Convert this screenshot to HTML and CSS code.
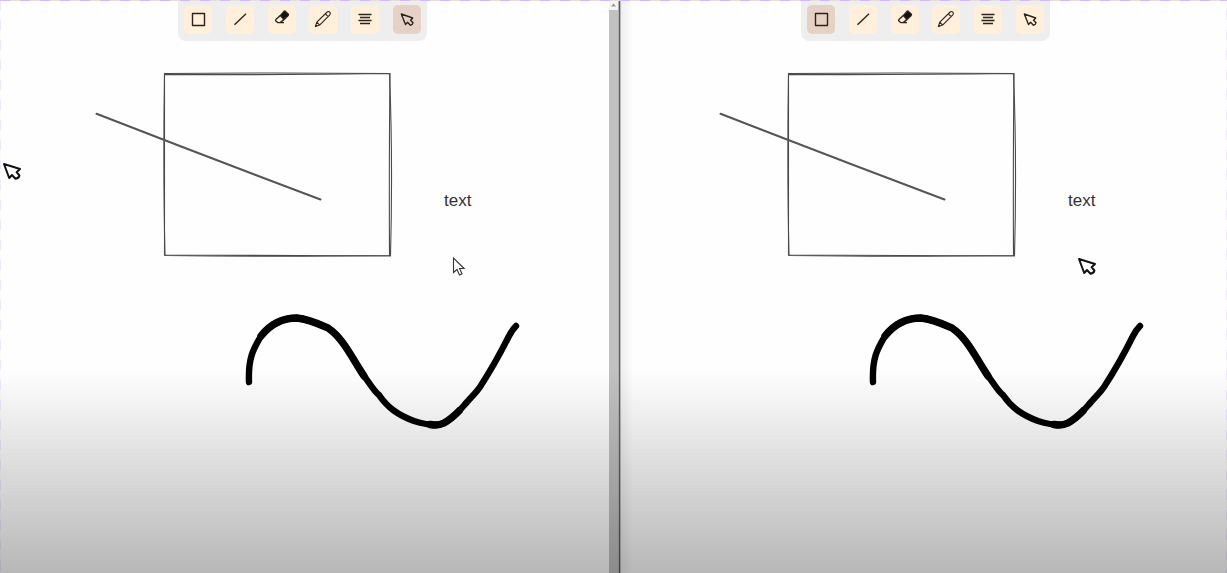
FILE: index.html
```html
<!DOCTYPE html>
<html lang="en">
<head>
<meta charset="utf-8">
<title>Shared whiteboard</title>
<link rel="stylesheet" href="styles.css">
</head>
<body>
<svg class="defs" aria-hidden="true">
  <symbol id="i-rect" viewBox="0 0 28 28"><rect x="8.5" y="7.5" width="12" height="12"/></symbol>
  <symbol id="i-line" viewBox="0 0 28 28"><path d="M8.5 18.7 20 7.7"/></symbol>
  <symbol id="i-eraser" viewBox="0 0 28 28"><path d="M12.3 9.6 16 5.400q.7-.6 1.400 0l2.800 2.600q.6.7 0 1.400l-4.200 4z" fill="#111"/><path d="M12.300 9.600 7.900 13.600q-.6.7 0 1.400l1.800 1.600h2.600l3.700-3.200M9.700 16.600H16"/></symbol>
  <symbol id="i-pencil" viewBox="0 0 28 28"><g stroke-width="1.100"><path d="M6.400 20.600 7.800 16.200 18.200 6q1.400-1 2.600.2t0 2.600L10.600 19.100zM16.400 7.800l2.800 2.800M7.800 16.200l2.800 2.900"/><path d="M6.400 20.600l1.300-1.300"/></g></symbol>
  <symbol id="i-text" viewBox="0 0 28 28"><path d="M7.500 8.500h13M9 11.500h10M7.500 14.500h13M9 17.500h10"/></symbol>
  <symbol id="i-cursor" viewBox="0 0 28 28"><path d="M8.300 8 12.500 18.500 14.600 16.200 17.400 19.200Q19.800 18.600 20 16.700L17.600 14.200 19.700 12z"/></symbol>
  <symbol id="drawing" overflow="visible">
    <g class="sketch">
      <path d="M164.500 73.500Q270 72.500 390 73.500Q389 160 389.500 255.500Q270 257 165 255.500Q163 170 164.500 73.500z"/>
      <path d="M164.500 74.500Q280 75 389.500 73.500Q393 160 390.500 256Q280 256 164.500 255Q164.500 170 164.500 74.500"/>
    </g>
    <path class="ruler" d="M96.500 113.800Q210 158 320.500 199.500"/>
    <path class="ink" d="M249 382C248 357 254 348 261 336C272 322 284 318 297 318C308 319 319 324 328 328C343 338 352 358 364 376C369 382 373 390 379 395C388 408 398 415 414 421C423 424 430 425 438 425C451 422 459 411 467 402C472 396 476 393 480 387C493 367 503 348 509 336C512 330 513 329 516 326"/>
    <path class="ink heavy" d="M261 336C272 322 284 318 297 318C308 319 319 324 328 328C343 338 352 358 364 376M430 424.500Q438 426 444 423Q451 419 459 411"/>
  </symbol>
  <symbol id="pointer" overflow="visible"><path class="pointer" d="M4 164 9.200 178 12 175 15.500 178.800Q19 178.200 19.400 175.500L16.600 172.200 20 169z"/></symbol>
</svg>
<main class="screen">
  <section class="pane pane-left" aria-label="First user">
    <svg class="scene">
      <use href="#drawing"/>
      <text class="note" x="444" y="206">text</text>
      <use href="#pointer"/>
      <path class="mouse" d="M453.500 258v14.500l3.500-3 2.500 5.500 2.500-1.200-2.400-5.300h4.600z"/>
    </svg>
    <nav class="toolbar" aria-label="Tools">
      <button class="tool" aria-label="Rectangle"><svg><use href="#i-rect"/></svg></button>
      <button class="tool" aria-label="Line"><svg><use href="#i-line"/></svg></button>
      <button class="tool" aria-label="Eraser"><svg><use href="#i-eraser"/></svg></button>
      <button class="tool" aria-label="Pencil"><svg><use href="#i-pencil"/></svg></button>
      <button class="tool" aria-label="Text"><svg><use href="#i-text"/></svg></button>
      <button class="tool active" aria-label="Select"><svg><use href="#i-cursor"/></svg></button>
    </nav>
  </section>
  <div class="scrollbar"><svg class="up" viewBox="0 0 9 9"><path d="M2 6 4.500 3 7 6z"/></svg><div class="thumb"></div></div>
  <div class="divider"></div>
  <section class="pane pane-right" aria-label="Second user">
    <svg class="scene">
      <use href="#drawing"/>
      <text class="note" x="444" y="206">text</text>
      <use href="#pointer" x="451" y="95"/>
    </svg>
    <nav class="toolbar" aria-label="Tools">
      <button class="tool active" aria-label="Rectangle"><svg><use href="#i-rect"/></svg></button>
      <button class="tool" aria-label="Line"><svg><use href="#i-line"/></svg></button>
      <button class="tool" aria-label="Eraser"><svg><use href="#i-eraser"/></svg></button>
      <button class="tool" aria-label="Pencil"><svg><use href="#i-pencil"/></svg></button>
      <button class="tool" aria-label="Text"><svg><use href="#i-text"/></svg></button>
      <button class="tool" aria-label="Select"><svg><use href="#i-cursor"/></svg></button>
    </nav>
  </section>
  <div class="shade"></div>
</main>
</body>
</html>
```
FILE: styles.css
```css
* { box-sizing: border-box; }
body {
  margin: 0;
  font-family: "Liberation Sans", Arial, sans-serif;
  background: #fefefe;
}
.defs { position: absolute; width: 0; height: 0; }
.screen {
  position: relative;
  display: grid;
  grid-template-columns: 609fr 9px 3px 606fr;
  height: 100vh;
  overflow: hidden;
}
.pane {
  display: grid;
  grid-template-rows: minmax(0, 1fr);
  overflow: hidden;
}
.pane-left { padding-right: 4px; }
.pane-right {
  padding-left: 3px;
  background: linear-gradient(90deg, #eeeeee, #fefefe 12px);
}
.scene {
  grid-area: 1 / 1;
  width: 100%;
  height: 100%;
  overflow: visible;
}
.toolbar {
  grid-area: 1 / 1;
  place-self: start center;
  display: flex;
  justify-content: space-between;
  width: 249px;
  padding: 5px 6px 7px;
  border-radius: 0 0 8px 8px;
  background: #eeeeee;
}
.tool {
  width: 28px;
  height: 29px;
  padding: 0;
  border: 0;
  border-radius: 5px;
  background: #ffefdb;
}
.tool.active { background: #e6d2c5; }
.tool svg {
  display: block;
  width: 28px;
  height: 28px;
  fill: none;
  stroke: #2b231c;
  stroke-width: 1.4;
  stroke-linejoin: round;
}
.sketch { fill: none; stroke: #4a4a4a; stroke-width: 1.1; }
.ruler { fill: none; stroke: #555555; stroke-width: 2; stroke-linecap: round; }
.ink {
  fill: none;
  stroke: #000000;
  stroke-width: 6.4;
  stroke-linecap: round;
  stroke-linejoin: round;
}
.ink.heavy { stroke-width: 7.4; }
.note { font-size: 17px; fill: #333333; }
.pointer { fill: #ffffff; stroke: #111111; stroke-width: 2; stroke-linejoin: round; }
.mouse { fill: #ffffff; stroke: #333333; stroke-width: 1.1; }
.scrollbar {
  display: flex;
  flex-direction: column;
  background: #f4f4f4;
}
.up { height: 10px; fill: #999999; }
.thumb { flex: 1; background: #c1c1c1; }
.divider { background: linear-gradient(90deg, #b0b0b0 1px, #555555 1px, #666666 2px, #bbbbbb 2px); }
.shade {
  position: absolute;
  inset: 0;
  pointer-events: none;
  background:
    linear-gradient(transparent 64.5%, rgba(0, 0, 0, 0.28)),
    repeating-linear-gradient(90deg, #d4b8ff 0 10px, #e3ded9 10px 20px) top / 100% 1px no-repeat,
    repeating-linear-gradient(#f0e8ff 0 10px, #fafafa 10px 20px) left / 1px 100% no-repeat,
    repeating-linear-gradient(#fafafa 0 10px, #f0e8ff 10px 20px) right / 1px 100% no-repeat;
}
```
